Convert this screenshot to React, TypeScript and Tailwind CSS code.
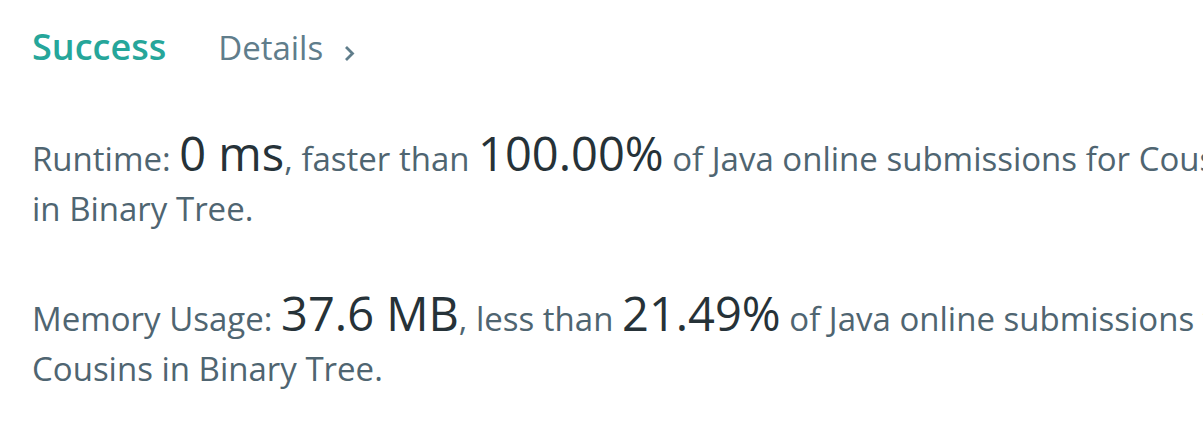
import React from 'react';

const font = { fontFamily: '"Open Sans", "Noto Sans", sans-serif' };

function Stat({ label, value, mid, pct, tail, wrap }: { label: string; value: string; mid: string; pct: string; tail: string; wrap: string }) {
  return (
    <div className="text-[33px] leading-[50px] text-[#4f6571]">
      <div className="whitespace-nowrap">
        {label} <span className="text-[47px] leading-[0] text-[#263238]">{value}</span>, {mid}{' '}
        <span className="text-[47px] leading-[0] text-[#263238]">{pct}</span> {tail}
      </div>
      <div className="whitespace-nowrap">{wrap}</div>
    </div>
  );
}

export default function App() {
  return (
    <div className="flex h-[425px] w-[1203px] bg-white" style={font}>
      <div className="flex-1 pl-8 pr-2 pt-[22px]">
        <div className="w-full overflow-hidden">
          {/* 결과 헤더 */}
          <div className="flex items-baseline gap-[52px] leading-[50px]">
            <span className="text-[36px] font-semibold text-[#26a69a]">Success</span>
            <span className="flex items-center gap-[21px] text-[33px] text-[#607d8b]">
              Details
              <svg className="mt-[10px]" width="11" height="17" viewBox="0 0 11 17" fill="none">
                <path d="M2 2l6.5 6.5L2 15" stroke="#607d8b" strokeWidth="2.8" />
              </svg>
            </span>
          </div>

          <div className="mt-[61px] flex flex-col gap-[60px]">
            <Stat
              label="Runtime:"
              value="0 ms"
              mid="faster than"
              pct="100.00%"
              tail="of Java online submissions for Cousins"
              wrap="in Binary Tree."
            />
            <Stat
              label="Memory Usage:"
              value="37.6 MB"
              mid="less than"
              pct="21.49%"
              tail="of Java online submissions for"
              wrap="Cousins in Binary Tree."
            />
          </div>
        </div>
      </div>
      <div className="w-[9px] bg-[#e6e6e6]" />
    </div>
  );
}
